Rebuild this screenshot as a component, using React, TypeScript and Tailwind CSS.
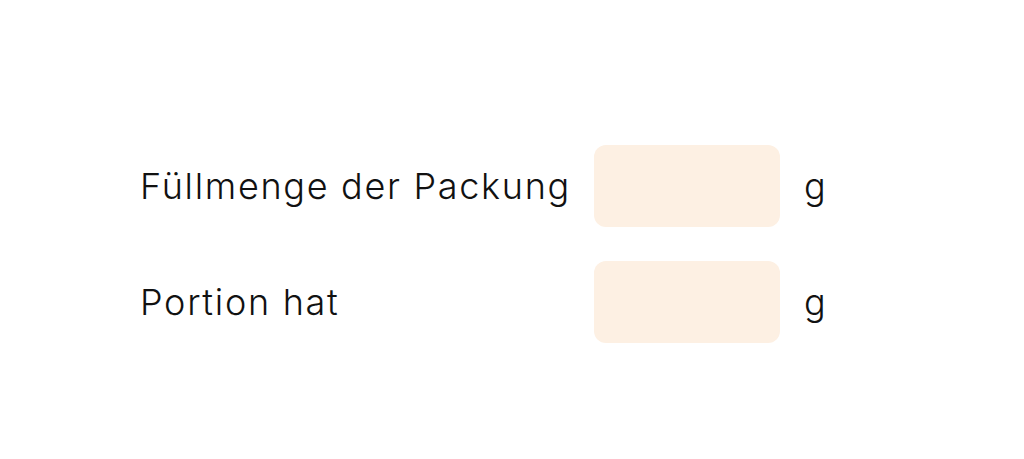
export default function App() {
  const rows = ['Füllmenge der Packung', 'Portion hat'];

  return (
    <div className="w-[1024px] h-[459px] bg-white font-['Inter',sans-serif] text-[#111] pt-[145px] pl-[140px]">
      <div className="flex flex-col gap-[34px]">
        {rows.map((label) => (
          <div key={label} className="flex items-center">
            <label className="w-[454px] text-[36px] font-[350] tracking-[1.7px] leading-none">
              {label}
            </label>
            <input
              type="text"
              className="w-[186px] h-[82px] rounded-[12px] bg-[#fdf0e3] outline-none px-4 text-[33px]"
            />
            <span className="ml-[24px] text-[36px] font-[350] leading-none">g</span>
          </div>
        ))}
      </div>
    </div>
  );
}
